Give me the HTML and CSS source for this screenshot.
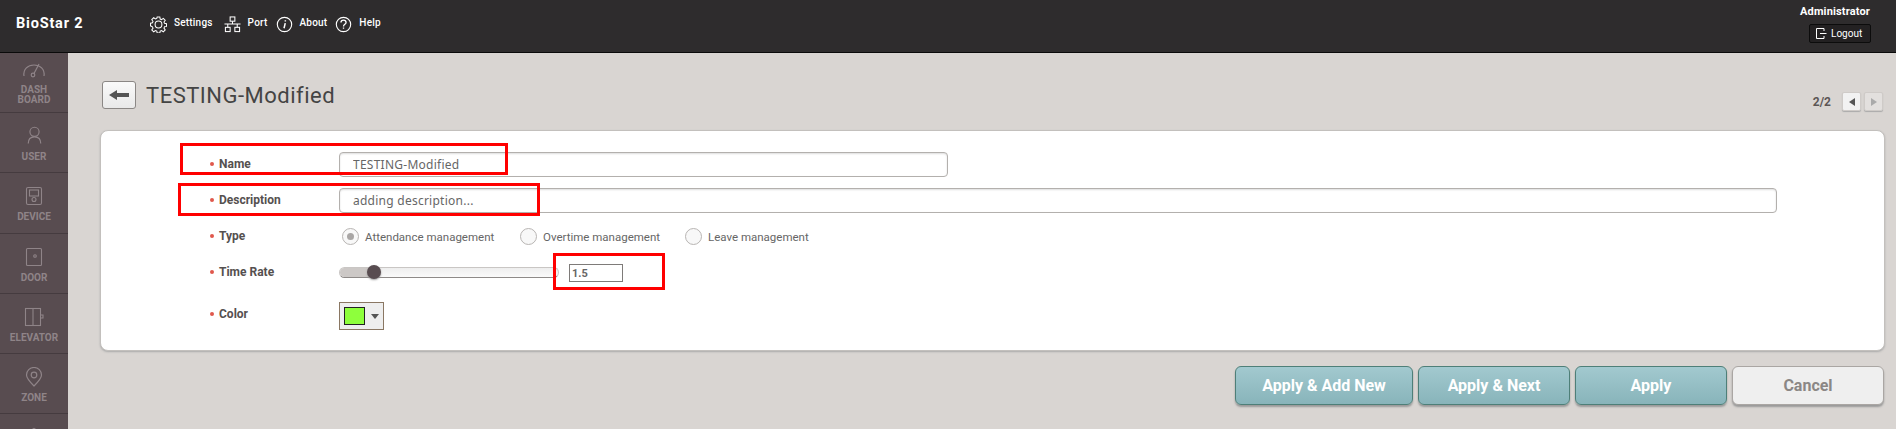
FILE: index.html
```html
<!DOCTYPE html>
<html lang="en">
<head>
<meta charset="utf-8">
<title>BioStar 2</title>
<link rel="stylesheet" href="styles.css">
</head>
<body>
<div class="app">
  <header class="topbar">
    <div class="brand">BioStar 2</div>
    <nav class="topnav">
      <a class="topitem">
        <svg class="topicon" width="17" height="17" viewBox="0 0 18 18" fill="none" stroke="#fff" stroke-width="1.1"><path d="M7.6 1h2.8l.4 2.2 1.4.6 1.9-1.3 2 2-1.3 1.9.6 1.4 2.1.4v2.8l-2.1.4-.6 1.4 1.3 1.9-2 2-1.9-1.3-1.4.6-.4 2.1H7.6l-.4-2.1-1.4-.6-1.9 1.3-2-2 1.3-1.9-.6-1.4L.5 10.4V7.6l2.1-.4.6-1.4-1.3-1.9 2-2 1.9 1.3 1.4-.6z"/><circle cx="9" cy="9" r="3.6"/></svg>
        <span>Settings</span>
      </a>
      <a class="topitem">
        <svg class="topicon" width="17" height="17" viewBox="0 0 18 18" fill="none" stroke="#fff" stroke-width="1.1"><rect x="6.5" y="1" width="5" height="4.5"/><rect x="1.5" y="12" width="5" height="4.5"/><rect x="11.5" y="12" width="5" height="4.5"/><path d="M9 5.5v3M.5 8.5h17M4 8.5V12M14 8.5V12"/></svg>
        <span>Port</span>
      </a>
      <a class="topitem">
        <svg class="topicon" width="17" height="17" viewBox="0 0 18 18" fill="none" stroke="#fff" stroke-width="1.2"><circle cx="9" cy="9" r="7.6"/><path d="M9.8 7.6 8.5 13M9.9 4.6v1.2" stroke-width="1.6"/></svg>
        <span>About</span>
      </a>
      <a class="topitem">
        <svg class="topicon" width="17" height="17" viewBox="0 0 18 18" fill="none" stroke="#fff" stroke-width="1.2"><circle cx="9" cy="9" r="7.6"/><path d="M6.3 7c0-1.6 1.2-2.6 2.7-2.6s2.700 1 2.700 2.400c0 2-2.700 2-2.700 4.200M9 12.200v1.400" stroke-width="1.4"/></svg>
        <span>Help</span>
      </a>
    </nav>
    <div class="account">
      <div class="admin">Administrator</div>
      <button class="logout">
        <svg width="11" height="11" viewBox="0 0 11 11" fill="none" stroke="#fff" stroke-width="1"><path d="M8 3V.5H.5v10H8V8M4 5.500h6.500"/></svg>
        <span>Logout</span>
      </button>
    </div>
  </header>
  <div class="body">
    <aside class="sidebar">
      <div class="sideitem first">
        <svg width="24" height="20" viewBox="0 0 24 20" fill="none" stroke="#8f8488" stroke-width="1.2"><path d="M2 14C1 7 6 3 12 3s11 4 10 11"/><circle cx="11" cy="13" r="1.8"/><path d="M12 11.500 17 2"/></svg>
        <div class="sidelabel">DASH<br>BOARD</div>
      </div>
      <div class="sideitem">
        <svg width="17" height="20" viewBox="0 0 20 24" fill="none" stroke="#8f8488" stroke-width="1.4"><circle cx="10" cy="7" r="5.500"/><path d="M2.500 21c0-5 3-8 7.500-8s7.500 3 7.500 8"/></svg>
        <div class="sidelabel">USER</div>
      </div>
      <div class="sideitem">
        <svg width="18" height="20" viewBox="0 0 18 20" fill="none" stroke="#8f8488" stroke-width="1.100"><rect x="1.500" y="1.500" width="15" height="17" rx="1.500"/><rect x="4.500" y="4" width="9" height="6"/><circle cx="9" cy="13.500" r="2"/></svg>
        <div class="sidelabel">DEVICE</div>
      </div>
      <div class="sideitem">
        <svg width="18" height="20" viewBox="0 0 18 20" fill="none" stroke="#8f8488" stroke-width="1.100"><rect x="1.500" y="1.500" width="15" height="17" rx="1"/><circle cx="10" cy="9" r="1.300"/></svg>
        <div class="sidelabel">DOOR</div>
      </div>
      <div class="sideitem">
        <svg width="20" height="20" viewBox="0 0 20 20" fill="none" stroke="#8f8488" stroke-width="1.100"><rect x="1.500" y="1.500" width="15" height="17"/><path d="M9 1.500v17M17 8h2v3h-2"/></svg>
        <div class="sidelabel">ELEVATOR</div>
      </div>
      <div class="sideitem">
        <svg width="18" height="20" viewBox="0 0 18 20" fill="none" stroke="#8f8488" stroke-width="1.200"><path d="M9 19C4 14 1.500 11 1.500 8a7.500 7.500 0 0 1 15 0c0 3-2.500 6-7.500 11z"/><circle cx="9" cy="8" r="2.800"/></svg>
        <div class="sidelabel">ZONE</div>
      </div>
      <div class="sideitem">
        <svg width="20" height="20" viewBox="0 0 20 20" fill="none" stroke="#8f8488" stroke-width="1.200"><path d="M10 1.500 18 6v7l-8 5-8-5V6z"/></svg>
      </div>
    </aside>
    <main class="main">
      <div class="titlerow">
        <button class="back">
          <svg width="20" height="10" viewBox="0 0 20 10" fill="#555"><path d="M0 5 8 0v3h12v4H8v3z"/></svg>
        </button>
        <h1 class="title">TESTING-Modified</h1>
        <div class="pager">
          <span class="pagecount">2/2</span>
          <button class="pagebtn"><span class="tri-left"></span></button>
          <button class="pagebtn off"><span class="tri-right"></span></button>
        </div>
      </div>
      <section class="card">
        <div class="row row-name">
          <div class="label">Name</div>
          <input class="text short" value="TESTING-Modified">
        </div>
        <div class="row row-desc">
          <div class="label">Description</div>
          <input class="text" value="adding description...">
        </div>
        <div class="row row-type">
          <div class="label">Type</div>
          <div class="radios">
            <div class="radio r1"><span class="circle on"></span><span>Attendance management</span></div>
            <div class="radio r2"><span class="circle"></span><span>Overtime management</span></div>
            <div class="radio"><span class="circle"></span><span>Leave management</span></div>
          </div>
        </div>
        <div class="row row-rate">
          <div class="label">Time Rate</div>
          <div class="slider"><span class="fill"></span><span class="thumb"></span></div>
          <input class="num" value="1.5">
        </div>
        <div class="row row-color">
          <div class="label">Color</div>
          <div class="colorpick"><span class="swatch"></span><span class="caret"></span></div>
        </div>
      </section>
      <div class="actions">
        <button class="btn primary w1">Apply &amp; Add New</button>
        <button class="btn primary w2">Apply &amp; Next</button>
        <button class="btn primary w2">Apply</button>
        <button class="btn cancel w2">Cancel</button>
      </div>
    </main>
  </div>
  <div class="mark mark-name"></div>
  <div class="mark mark-desc"></div>
  <div class="mark mark-rate"></div>
</div>
</body>
</html>
```

FILE: styles.css
```css
* { box-sizing: border-box; }
html, body { margin: 0; height: 100%; overflow: hidden; }
body { font-family: Roboto, "Liberation Sans", sans-serif; background: #d9d5d2; }
.app { position: relative; width: 1896px; height: 429px; overflow: hidden; }

.topbar { height: 53px; background: #2e2c2d; border-bottom: 1px solid #0a0a0a; display: flex; color: #fff; }
.brand { width: 150px; padding: 15px 0 0 16px; font: 700 14.5px/18px Roboto, sans-serif; letter-spacing: .8px; }
.topnav { display: flex; gap: 8px; padding-top: 16px; align-items: flex-start; }
.topitem { display: flex; gap: 7px; font-size: 10px; font-weight: 500; line-height: 13px; letter-spacing: .2px; }
.topitem:first-child { margin-right: 3px; }
.topicon { display: block; flex: none; }
.account { margin-left: auto; padding: 4px 25px 0 0; display: flex; flex-direction: column; align-items: flex-end; }
.admin { font-size: 11px; font-weight: 700; line-height: 15px; margin-right: 1px; letter-spacing: .15px; }
.logout { margin-top: 5px; width: 62px; height: 19px; padding: 0 0 0 6px; display: flex; align-items: center; gap: 4px; background: #232122; border: 1px solid #0c0c0c; border-radius: 2px; color: #fff; font: 400 10px Roboto, sans-serif; }

.body { display: flex; height: 376px; }
.sidebar { width: 68px; flex: none; background: #584c50; }
.sideitem { height: 60.3px; border-bottom: 1px solid #453b3f; display: flex; flex-direction: column; align-items: center; padding-top: 13px; }
.sideitem.first { padding-top: 9px; height: 60px; }
.sidelabel { margin-top: 6px; font-size: 10px; font-weight: 700; line-height: 10px; color: #8f8488; text-align: center; }
.first .sidelabel { margin-top: 3px; }

.main { flex: 1; min-width: 0; padding: 28px 11px 0 32px; }
.titlerow { height: 49px; display: flex; align-items: flex-start; }
.back { width: 34px; height: 28px; margin-left: 2px; padding: 0; display: flex; align-items: center; justify-content: center; background: linear-gradient(#fafafa, #e9e9e9); border: 1px solid #8b8785; border-radius: 3px; }
.title { margin: 0 0 0 10px; font-size: 22px; font-weight: 400; line-height: 30px; color: #444; letter-spacing: .5px; }
.pager { margin-left: auto; padding: 11px 2px 0 0; display: flex; align-items: center; gap: 3px; }
.pagecount { margin-right: 8px; font-size: 12px; font-weight: 700; color: #5c5655; }
.pagebtn { width: 19px; height: 19px; padding: 0; display: flex; align-items: center; justify-content: center; background: #f2f2f2; border: 1px solid #cfcbc8; border-radius: 2px; box-shadow: 0 1px 1px #aaa; }
.pagebtn.off { background: #e3e0de; }
.tri-left { border: 4px solid transparent; border-left: 0; border-right: 6px solid #555; }
.tri-right { border: 4px solid transparent; border-right: 0; border-left: 6px solid #aaa; }

.card { height: 221px; background: #fff; border: 1px solid #c3c0bd; border-radius: 8px; box-shadow: 0 1px 2px #aaa; padding-top: 21px; position: relative; }
.row { display: flex; align-items: flex-start; }
.label { width: 238px; padding-left: 118px; font-size: 12px; font-weight: 700; line-height: 14px; color: #55504f; position: relative; flex: none; }
.label::before { content: ""; position: absolute; left: 109px; top: 5px; width: 4px; height: 4px; border-radius: 50%; background: #e0584c; }
.row-name .label, .row-desc .label { margin-top: 5px; }
.text { display: block; width: 1438px; height: 25px; padding: 0 13px; border: 1px solid #b3b0ad; border-radius: 4px; box-shadow: inset 0 1px 2px #ddd; font: 400 12px "Noto Sans", sans-serif; letter-spacing: .25px; color: #666; background: #fff; }
.short { width: 609px; }
.row-desc { margin-top: 11px; }
.row-type { margin-top: 16px; }
.radios { display: flex; margin: -1px 0 0 3px; }
.radio { display: flex; align-items: center; gap: 6px; font-size: 11.5px; line-height: 17px; color: #666; }
.r1 { width: 178px; }
.r2 { width: 165px; }
.radio > span:last-child { position: relative; top: 1px; }
.circle { width: 17px; height: 17px; border: 1px solid #b8b5b3; border-radius: 50%; background: #f8f8f8; position: relative; flex: none; }
.circle.on::after { content: ""; position: absolute; left: 4px; top: 4px; width: 7px; height: 7px; border-radius: 50%; background: #a9a6a5; }
.row-rate { margin-top: 20px; }
.slider { width: 220px; height: 11px; margin-top: 2px; position: relative; background: linear-gradient(#eee, #fafafa); border: 1px solid #c9c6c4; border-bottom-color: #8e8a88; border-radius: 6px; }
.fill { position: absolute; left: 0; top: 0; bottom: 0; width: 35px; background: #ccc8c6; border-radius: 6px 0 0 6px; }
.thumb { position: absolute; left: 27px; top: -3px; width: 14px; height: 14px; border-radius: 50%; background: #584c50; box-shadow: 0 1px 2px #999; }
.num { width: 54px; height: 18px; margin: -1px 0 0 10px; padding: 0 2px; border: 1px solid #7e7b79; font: 700 11px Roboto, sans-serif; color: #666; }
.row-color { margin-top: 20px; }
.row-color .label { margin-top: 5px; }
.colorpick { width: 45px; height: 28px; padding: 4px; display: flex; align-items: center; gap: 6px; background: #eee; border: 1px solid #8a7763; }
.swatch { width: 22px; height: 18px; background: #8eff3c; border: 1px solid #222; }
.caret { border: 4px solid transparent; border-bottom: 0; border-top: 5px solid #555; }

.actions { display: flex; justify-content: flex-end; gap: 5px; margin-top: 15px; padding-right: 1px; }
.btn { height: 39px; padding: 0; border-radius: 6px; font: 700 16px Roboto, sans-serif; box-shadow: 0 2px 2px #999; }
.w1 { width: 178px; }
.w2 { width: 152px; }
.primary { background: linear-gradient(#a2c9cf, #88b4ba); border: 1px solid #4e7f78; color: #fff; }
.cancel { background: #efefef; border: 1px solid #aaa6a3; color: #8b8785; }

.mark { position: absolute; border: 3px solid #f00; }
.mark-name { left: 180px; top: 143px; width: 328px; height: 32px; }
.mark-desc { left: 178px; top: 183px; width: 362px; height: 33px; }
.mark-rate { left: 553px; top: 253px; width: 112px; height: 37px; }
```
